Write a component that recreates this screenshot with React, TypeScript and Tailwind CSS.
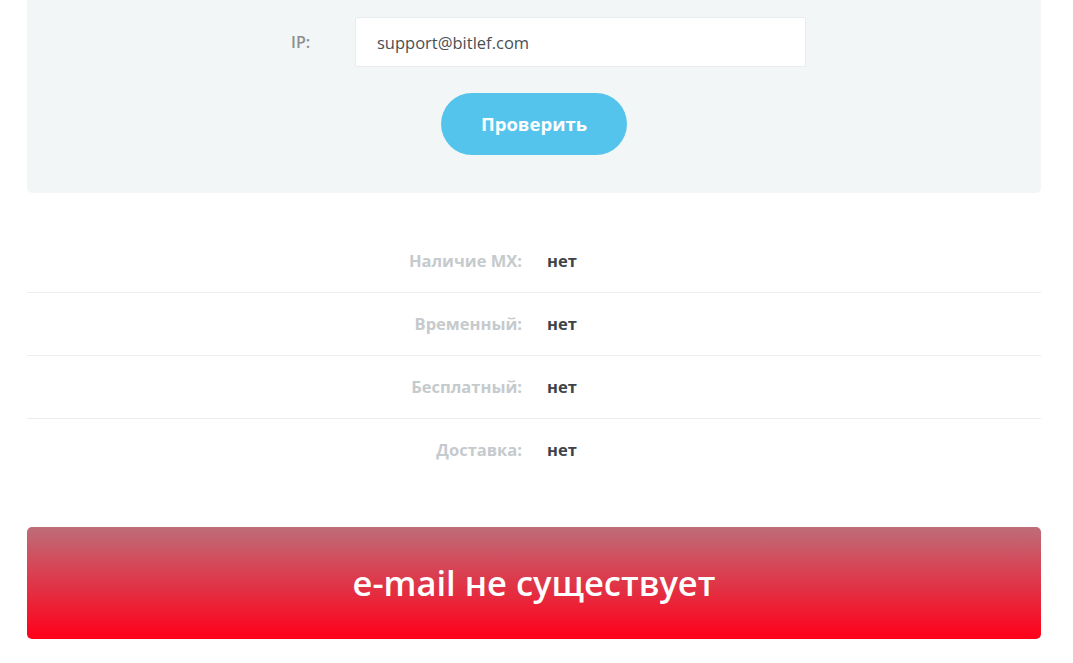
import React from 'react';

const rows = [
  { label: 'Наличие MX:', value: 'нет' },
  { label: 'Временный:', value: 'нет' },
  { label: 'Бесплатный:', value: 'нет' },
  { label: 'Доставка:', value: 'нет' },
];

const App = () => {
  return (
    <div className="min-h-screen bg-white" style={{ fontFamily: '"Open Sans", "Noto Sans", sans-serif' }}>
      <div className="ml-[27px] w-[1014px]">
        {/* форма проверки */}
        <div className="bg-[#f3f6f7] rounded-b-[5px] pt-[17px] pb-[38px]">
          <div className="flex items-center pl-[264px]">
            <label className="w-[64px] text-[16px] font-semibold text-[#8b8f91]">IP:</label>
            <input
              type="text"
              defaultValue="support@bitlef.com"
              className="w-[451px] h-[50px] bg-white border border-[#e8ecee] rounded-[2px] px-[21px] text-[16.5px] text-[#4a4f54] outline-none"
            />
          </div>
          <div className="flex justify-center mt-[26px]">
            <button className="w-[186px] h-[62px] rounded-full bg-[#55c4ec] text-white text-[18.5px] font-bold">
              Проверить
            </button>
          </div>
        </div>

        {/* результаты */}
        <div className="mt-[37px]">
          {rows.map((row, i) => (
            <div
              key={row.label}
              className={
                'grid grid-cols-[495px_1fr] gap-[25px] items-center h-[63px] ' +
                (i < rows.length - 1 ? 'border-b border-[#ebeef0]' : '')
              }
            >
              <div className="text-right text-[16.5px] font-bold text-[#c5cacd]">{row.label}</div>
              <div className="text-[16.5px] font-bold text-[#3d4349]">{row.value}</div>
            </div>
          ))}
        </div>

        <div className="mt-[45px] h-[112px] rounded-[5px] bg-[linear-gradient(to_bottom,#be6d79,#ff0019)] flex items-center justify-center">
          <span className="text-white text-[34.5px] font-semibold">e-mail не существует</span>
        </div>
      </div>
    </div>
  );
};

export default App;
